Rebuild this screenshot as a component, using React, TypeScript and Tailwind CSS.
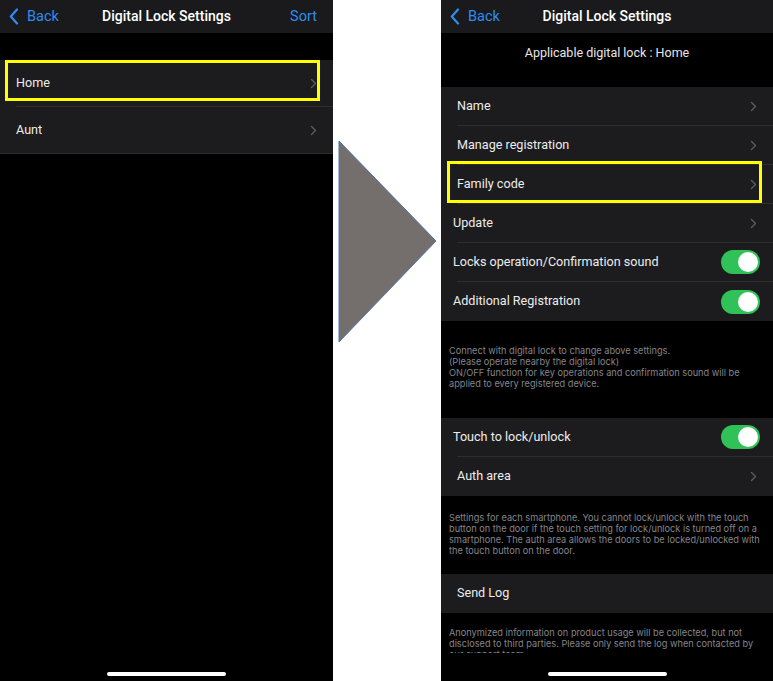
import React from 'react';

const Chevron: React.FC = () => (
    <svg width="7" height="11" viewBox="0 0 7 11" className="shrink-0">
        <path d="M1.5 1.5 L5.5 5.5 L1.5 9.5" fill="none" stroke="#5c5c60" strokeWidth="1.4" strokeLinecap="round" strokeLinejoin="round" />
    </svg>
);

const BackChevron: React.FC = () => (
    <svg width="10" height="17" viewBox="0 0 10 17">
        <path d="M8 1.5 L1.8 8.5 L8 15.5" fill="none" stroke="#2f8cf2" strokeWidth="2.2" strokeLinecap="round" strokeLinejoin="round" />
    </svg>
);

const Toggle: React.FC = () => (
    <div className="w-[39px] h-[24px] rounded-full bg-[#31c159] flex items-center justify-end pr-[2px] shrink-0">
        <div className="w-[20px] h-[20px] rounded-full bg-white" />
    </div>
);

const NavBar: React.FC<{ right?: string }> = ({ right }) => (
    <div className="h-[33px] bg-[#1a1a1c] flex items-center px-[9px] relative">
        <div className="flex items-center gap-[8px] text-[#2f8cf2] text-[14.5px]">
            <BackChevron />
            <span>Back</span>
        </div>
        <div className="absolute left-0 right-0 text-center text-white font-medium text-[14px] pointer-events-none">
            Digital Lock Settings
        </div>
        {right && <span className="ml-auto mr-[7px] text-[#2f8cf2] text-[14.5px]">{right}</span>}
    </div>
);

const Row: React.FC<{
    label: string;
    pl?: string;
    toggle?: boolean;
    chevron?: boolean;
    sep?: boolean;
    h?: string;
    highlight?: string;
}> = ({ label, pl = 'pl-[16px]', toggle, chevron = true, sep = true, h = 'h-[39px]', highlight }) => (
    <div className={`relative ${h} bg-[#1c1c1e] flex flex-col`}>
        <div className={`flex-1 flex items-center ${pl} ${toggle ? 'pr-[13px]' : 'pr-[16px]'}`}>
            <span className="text-[#ececec] text-[12.6px]">{label}</span>
            <div className="ml-auto flex items-center">
                {toggle ? <Toggle /> : chevron ? <Chevron /> : null}
            </div>
        </div>
        {sep && <div className="h-px bg-[#2e2e31] ml-[16px]" />}
        {highlight && <div className={`absolute border-[3px] border-[#ffff00] ${highlight}`} />}
    </div>
);

const Footer: React.FC<{ children: React.ReactNode; className?: string }> = ({ children, className }) => (
    <div
        className={`px-[8px] text-[9.2px] leading-[11px] text-[#85858a] ${className || ''}`}
        style={{ fontFamily: 'Inter, "Noto Sans", sans-serif' }}
    >
        {children}
    </div>
);

const HomeBar: React.FC = () => (
    <div className="mt-auto h-[9px] flex justify-center shrink-0">
        <div className="w-[119px] h-[4px] rounded-full bg-white" />
    </div>
);

export default function App() {
    return (
        <div className="w-[773px] h-[681px] bg-white flex overflow-hidden" style={{ fontFamily: 'Roboto, "Noto Sans", sans-serif' }}>
            {/* left screen */}
            <div className="w-[333px] h-full bg-black flex flex-col">
                <NavBar right="Sort" />
                <div className="h-[27px]" />
                <Row label="Home" h="h-[47px]" highlight="left-[5px] top-0 w-[315px] h-[41px]" />
                <Row label="Aunt" h="h-[46px]" sep={false} />
                <div className="h-px bg-[#2e2e31]" />
                <HomeBar />
            </div>

            {/* arrow */}
            <div className="w-[108px] h-full flex flex-col pt-[140px] pl-[5px]">
                <svg width="100" height="204" viewBox="0 0 100 204">
                    <polygon points="1,1 98,101 1,202" fill="#746f6c" stroke="#4a78b0" strokeWidth="1" />
                </svg>
            </div>

            {/* right screen */}
            <div className="w-[332px] h-full bg-black flex flex-col">
                <NavBar />
                <div className="h-[54px] flex justify-center pt-[11px]">
                    <span className="text-[#e6e6e6] text-[12.5px]">Applicable digital lock : Home</span>
                </div>
                <Row label="Name" />
                <Row label="Manage registration" />
                <Row label="Family code" highlight="left-[6px] top-[-4px] w-[315px] h-[42px]" />
                <Row label="Update" pl="pl-[12px]" />
                <Row label="Locks operation/Confirmation sound" pl="pl-[12px]" toggle />
                <Row label="Additional Registration" pl="pl-[12px]" toggle sep={false} />
                <Footer className="pt-[24px] h-[97px]">
                    Connect with digital lock to change above settings.
                    <br />
                    (Please operate nearby the digital lock)
                    <br />
                    ON/OFF function for key operations and confirmation sound will be applied to every registered device.
                </Footer>
                <Row label="Touch to lock/unlock" pl="pl-[12px]" toggle />
                <Row label="Auth area" sep={false} />
                <Footer className="pt-[16px] h-[78px]">
                    Settings for each smartphone. You cannot lock/unlock with the touch button on the door if the touch setting for lock/unlock is turned off on a smartphone. The auth area allows the doors to be locked/unlocked with the touch button on the door.
                </Footer>
                <Row label="Send Log" chevron={false} sep={false} />
                <Footer className="pt-[14px] h-[40px] overflow-hidden">
                    <div className="h-[27px] overflow-hidden">
                        Anonymized information on product usage will be collected, but not disclosed to third parties. Please only send the log when contacted by our support team.
                    </div>
                </Footer>
                <HomeBar />
            </div>
        </div>
    );
}
